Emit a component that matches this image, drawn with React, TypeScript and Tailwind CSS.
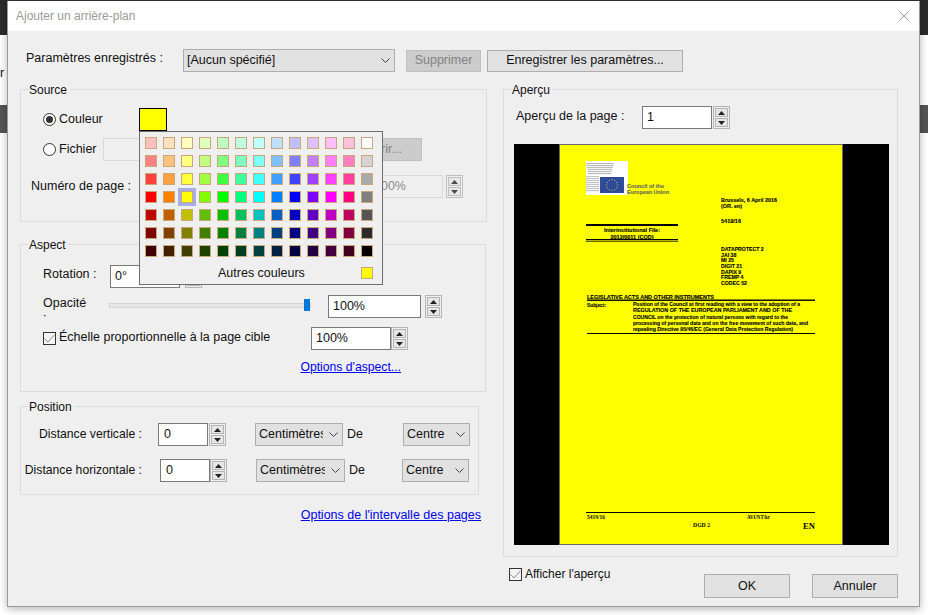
import type { ReactNode } from 'react';

const PALETTE = [
  ['bg-[#ffbfbf]', 'bg-[#ffdfbf]', 'bg-[#ffffbf]', 'bg-[#dfffbf]', 'bg-[#bfffbf]', 'bg-[#bfffdf]', 'bg-[#bfffff]', 'bg-[#bfdfff]', 'bg-[#bfbfff]', 'bg-[#dfbfff]', 'bg-[#ffbfff]', 'bg-[#ffbfdf]', 'bg-[#ffffff]'],
  ['bg-[#ff8080]', 'bg-[#ffc080]', 'bg-[#ffff80]', 'bg-[#c0ff80]', 'bg-[#80ff80]', 'bg-[#80ffc0]', 'bg-[#80ffff]', 'bg-[#80c0ff]', 'bg-[#8080ff]', 'bg-[#c080ff]', 'bg-[#ff80ff]', 'bg-[#ff80c0]', 'bg-[#d4d4d4]'],
  ['bg-[#ff4040]', 'bg-[#ffa040]', 'bg-[#ffff40]', 'bg-[#a0ff40]', 'bg-[#40ff40]', 'bg-[#40ffa0]', 'bg-[#40ffff]', 'bg-[#40a0ff]', 'bg-[#4040ff]', 'bg-[#a040ff]', 'bg-[#ff40ff]', 'bg-[#ff40a0]', 'bg-[#aaaaaa]'],
  ['bg-[#ff0000]', 'bg-[#ff8000]', 'bg-[#ffff00]', 'bg-[#80ff00]', 'bg-[#00ff00]', 'bg-[#00ff80]', 'bg-[#00ffff]', 'bg-[#0080ff]', 'bg-[#0000ff]', 'bg-[#8000ff]', 'bg-[#ff00ff]', 'bg-[#ff0080]', 'bg-[#808080]'],
  ['bg-[#c00000]', 'bg-[#c06000]', 'bg-[#c0c000]', 'bg-[#60c000]', 'bg-[#00c000]', 'bg-[#00c060]', 'bg-[#00c0c0]', 'bg-[#0060c0]', 'bg-[#0000c0]', 'bg-[#6000c0]', 'bg-[#c000c0]', 'bg-[#c00060]', 'bg-[#555555]'],
  ['bg-[#800000]', 'bg-[#804000]', 'bg-[#808000]', 'bg-[#408000]', 'bg-[#008000]', 'bg-[#008040]', 'bg-[#008080]', 'bg-[#004080]', 'bg-[#000080]', 'bg-[#400080]', 'bg-[#800080]', 'bg-[#800040]', 'bg-[#2b2b2b]'],
  ['bg-[#400000]', 'bg-[#402000]', 'bg-[#404000]', 'bg-[#204000]', 'bg-[#004000]', 'bg-[#004020]', 'bg-[#004040]', 'bg-[#002040]', 'bg-[#000040]', 'bg-[#200040]', 'bg-[#400040]', 'bg-[#400020]', 'bg-[#000000]'],
];

function Group({ title, className, children }: { title: string; className: string; children: ReactNode }) {
  return (
    <div className={`relative border border-[#dcdcdc] ${className}`}>
      <span className="absolute -top-[8px] left-[8px] bg-[#efefef] pr-[2px] text-[12px] leading-[16px]">{title}</span>
      {children}
    </div>
  );
}

function Spinner({ className = '' }: { className?: string }) {
  return (
    <div className={`flex h-[23px] w-[17px] shrink-0 flex-col justify-center gap-px border border-[#b4b4b4] px-px ${className}`}>
      <div className="flex h-[9px] items-center justify-center border border-[#b4b4b4] bg-[#e6e6e6]">
        <svg width="7" height="4" viewBox="0 0 7 4"><path d="M3.5 0 7 4H0z" fill="#222" /></svg>
      </div>
      <div className="flex h-[9px] items-center justify-center border border-[#b4b4b4] bg-[#e6e6e6]">
        <svg width="7" height="4" viewBox="0 0 7 4"><path d="M3.5 4 7 0H0z" fill="#222" /></svg>
      </div>
    </div>
  );
}

function Field({ value, className }: { value: string; className: string }) {
  return (
    <div className={`flex h-[23px] shrink-0 items-center border border-[#7a7a7a] bg-white pb-px pl-[4px] ${className}`}>
      {value}
    </div>
  );
}

function Select({ value, className }: { value: string; className: string }) {
  return (
    <div className={`flex h-[23px] shrink-0 items-center border border-[#adadad] bg-[#e1e1e1] pb-px pl-[3px] pr-[4px] ${className}`}>
      <span className="min-w-0 flex-1 overflow-hidden whitespace-nowrap">{value}</span>
      <svg className="ml-[6px] shrink-0" width="9" height="5" viewBox="0 0 9 5" fill="none" stroke="#444">
        <path d="M.5.5 4.5 4.5 8.5.5" />
      </svg>
    </div>
  );
}

function Check() {
  return (
    <div className="flex h-[13px] w-[13px] shrink-0 items-center justify-center border border-[#333] bg-[#f4f4f4]">
      <svg width="11" height="9" viewBox="0 0 11 9" fill="none" stroke="#8a8a8a">
        <path d="M.5 4.5 4 8 10.5.8" />
      </svg>
    </div>
  );
}

function Radio({ on }: { on?: boolean }) {
  return (
    <div className="flex h-[13px] w-[13px] shrink-0 items-center justify-center rounded-full border border-[#333] bg-white">
      {on && <div className="h-[7px] w-[7px] rounded-full bg-[#333]" />}
    </div>
  );
}

function LinkText({ children }: { children: ReactNode }) {
  return <a className="text-[#0000ee] underline underline-offset-1 leading-[17px]">{children}</a>;
}

function ColorPopup() {
  return (
    <div className="absolute left-0 top-[23px] z-10 h-[154px] w-[244px] border border-[#6e6e6e] bg-[#efefef] pl-[5px] pt-[5px]">
      <div className="grid grid-cols-[repeat(13,12px)] gap-[6px]">
        {PALETTE.flat().map((color, i) => (
          <div
            key={i}
            className={`h-[12px] w-[12px] border border-[#c8a878] ${color} ${i === 41 ? 'ring-[3px] ring-[#a6aee8]' : ''}`}
          />
        ))}
      </div>
      <div className="mt-[9px] flex h-[14px] w-[228px] items-center">
        <span className="ml-[73px]">Autres couleurs</span>
        <div className="ml-auto h-[12px] w-[12px] border border-[#c8a878] bg-[#ffff00]" />
      </div>
    </div>
  );
}

const ADDRESSEES = [
  ['DATAPROTECT 2', 251],
  ['JAI 38', 256.5],
  ['MI 25', 262],
  ['DIGIT 21', 268],
  ['DAPIX 9', 273.5],
  ['FREMP 4', 279],
  ['CODEC 52', 285],
] as const;

const SUBJECT = [
  ['Position of the Council at first reading with a view to the adoption of a', 306, 167],
  ['REGULATION OF THE EUROPEAN PARLIAMENT AND OF THE', 312, 159],
  ['COUNCIL on the protection of natural persons with regard to the', 319, 155],
  ['processing of personal data and on the free movement of such data, and', 325, 175],
  ['repealing Directive 95/46/EC (General Data Protection Regulation)', 331, 160],
] as const;

const STARS = Array.from({ length: 12 }, (_, i) => ({
  cx: 612 + 5.5 * Math.cos((i * Math.PI) / 6),
  cy: 185 + 5.5 * Math.sin((i * Math.PI) / 6),
}));

// thumbnail of the document, coordinates are screen pixels
function PageThumb() {
  return (
    <svg className="ml-[45px] block" width="284" height="401" viewBox="559 144 284 401" fontWeight="700" fontSize="5.2" fill="#000">
      <rect x="559.5" y="144.5" width="283" height="400" fill="#ffff00" stroke="#6a6a6a" />
      <rect x="586" y="161" width="42" height="34" fill="#fff" />
      {[163, 165, 167, 169, 171, 173].map((y, i) => (
        <rect key={y} x={586 + i * 0.4} y={y} width={28 - i} height="1.2" fill="#bdbdbd" />
      ))}
      {[176, 178, 180, 182, 184, 186, 188, 190].map((y) => (
        <rect key={y} x="586" y={y} width="13" height="1.2" fill="#c4c4c4" />
      ))}
      <rect x="600" y="177" width="24" height="16" fill="#2f4a98" />
      {STARS.map((s, i) => (
        <circle key={i} cx={s.cx} cy={s.cy} r="0.6" fill="#e8d840" />
      ))}
      <g fill="#6f6f50" stroke="#6f6f50" strokeWidth="0.15">
        <text x="627" y="187.5" textLength="37" lengthAdjust="spacingAndGlyphs">Council of the</text>
        <text x="627" y="193.5" textLength="42" lengthAdjust="spacingAndGlyphs">European Union</text>
      </g>
      <g stroke="#000" strokeWidth="0.12">
        <text x="721" y="201.5" textLength="56" lengthAdjust="spacingAndGlyphs">Brussels, 6 April 2016</text>
        <text x="721" y="207.5" textLength="21" lengthAdjust="spacingAndGlyphs">(OR. en)</text>
        <text x="721" y="223" textLength="20" lengthAdjust="spacingAndGlyphs">5419/16</text>
        <text x="604" y="231.5" textLength="56" lengthAdjust="spacingAndGlyphs">Interinstitutional File:</text>
        <text x="610.5" y="238.5" textLength="43" lengthAdjust="spacingAndGlyphs">2012/0011 (COD)</text>
        {ADDRESSEES.map(([t, y]) => (
          <text key={t} x="721" y={y}>{t}</text>
        ))}
        <text x="587" y="298.5" textLength="127" lengthAdjust="spacingAndGlyphs">LEGISLATIVE ACTS AND OTHER INSTRUMENTS</text>
        <text x="587" y="306.5" textLength="19" lengthAdjust="spacingAndGlyphs">Subject:</text>
        {SUBJECT.map(([t, y, w]) => (
          <text key={t} x="633" y={y} textLength={w} lengthAdjust="spacingAndGlyphs">{t}</text>
        ))}
      </g>
      <rect x="586" y="224" width="92" height="2" fill="#000" />
      <rect x="586" y="239" width="92" height="1" fill="#000" />
      <rect x="586" y="240.7" width="92" height="0.9" fill="#000" />
      <rect x="587" y="299.5" width="228" height="1.4" fill="#000" />
      <rect x="587" y="333" width="228" height="1" fill="#000" />
      <rect x="586" y="512" width="229" height="1" fill="#000" />
      <g fontFamily="'Liberation Serif', serif" fontSize="5.4">
        <text x="587" y="519" textLength="18" lengthAdjust="spacingAndGlyphs">5419/16</text>
        <text x="693" y="526.5" textLength="17" lengthAdjust="spacingAndGlyphs">DGD 2</text>
        <text x="747" y="519" textLength="23" lengthAdjust="spacingAndGlyphs">AVI/NT/kr</text>
        <text x="803" y="528.5" fontSize="8.5">EN</text>
      </g>
    </svg>
  );
}

export default function App() {
  return (
    <div className="relative h-[615px] w-[928px] overflow-hidden bg-white pt-px pl-[7px] font-['Liberation_Sans',Arial,sans-serif] text-[12.5px] text-[#111]">
      {/* app behind the dialog */}
      <div className="absolute inset-x-0 top-0 h-px bg-[#333]" />
      <div className="absolute left-0 top-0 h-[35px] w-[7px] bg-[#2b2b2b]" />
      <div className="absolute left-0 top-[105px] h-[28px] w-[7px] bg-[#555]" />
      <span className="absolute left-0 top-[64px]">r</span>
      <div className="absolute right-0 top-0 h-[35px] w-[8px] bg-[#2b2b2b]" />
      <div className="absolute right-0 top-[105px] h-[28px] w-[8px] bg-[#555]" />

      <div className="relative flex h-[606px] w-[913px] flex-col border-x border-b border-[#9a9a9a] bg-[#efefef] shadow-[0_2px_8px_rgba(0,0,0,0.3)]">
        <div className="flex h-[30px] shrink-0 items-center justify-between bg-white pl-[8px] pr-[9px] text-[12px] text-[#9a9a9a]">
          <span>Ajouter un arrière-plan</span>
          <svg width="12" height="12" viewBox="0 0 12 12" stroke="#a0a0a0" fill="none">
            <path d="M.5.5 11.5 11.5M11.5.5.5 11.5" />
          </svg>
        </div>

        <div className="flex flex-col pl-[12px]">
          <div className="mt-[18px] flex h-[23px] items-center pl-[6px]">
            <span className="w-[157px] pb-[4px]">Paramètres enregistrés :</span>
            <Select value="[Aucun spécifié]" className="w-[212px]" />
            <button className="ml-[11px] h-[22px] w-[75px] border border-[#bfbfbf] bg-[#cccccc] pb-px text-[#838383]">Supprimer</button>
            <button className="ml-[6px] h-[22px] w-[196px] border border-[#adadad] bg-[#e1e1e1] pb-px">Enregistrer les paramètres...</button>
          </div>

          <div className="mt-[17px] flex items-start">
            <div className="flex w-[467px] flex-col">
              <Group title="Source" className="h-[133px] w-[467px]">
                <div className="mt-[18px] flex h-[23px] items-center pl-[22px]">
                  <Radio on />
                  <span className="ml-[3px] w-[80px]">Couleur</span>
                  <div className="relative">
                    <div className="h-[23px] w-[28px] border border-black bg-[#ffff00]" />
                    <ColorPopup />
                  </div>
                </div>
                <div className="mt-[7px] flex h-[23px] items-center pl-[22px]">
                  <Radio />
                  <span className="ml-[3px] w-[44px]">Fichier</span>
                  <div className="h-[23px] w-[230px] border border-[#d8d8d8] bg-[#efefef]" />
                  <button className="ml-[5px] h-[23px] w-[84px] border border-[#bfbfbf] bg-[#cccccc] text-[#838383]">Ouvrir...</button>
                </div>
                <div className="mt-[14px] flex h-[23px] items-center pl-[10px]">
                  <span className="w-[337px]">Numéro de page :</span>
                  <div className="flex h-[23px] w-[75px] items-center border border-[#d8d8d8] pl-[5px] text-[#8a8a8a]">100%</div>
                  <Spinner className="ml-[3px] opacity-80" />
                </div>
              </Group>

              <Group title="Aspect" className="mt-[22px] h-[148px] w-[466px]">
                <div className="mt-[20px] flex h-[23px] items-center pl-[22px]">
                  <span className="w-[67px] pb-[4px]">Rotation :</span>
                  <Field value="0°" className="w-[70px]" />
                  <Spinner className="ml-[5px]" />
                </div>
                <div className="mt-[7px] flex h-[23px] items-center pl-[22px]">
                  <span className="h-[23px] w-[46px] overflow-hidden pt-px leading-[15px]">Opacité :</span>
                  <div className="relative ml-[20px] mb-[3px] h-[5px] w-[202px] border border-[#d4d4d4] bg-[#e6e6e6]">
                    <div className="absolute -top-[5px] left-[194px] h-[12px] w-[6px] bg-[#0078d7]" />
                  </div>
                  <Field value="100%" className="ml-[17px] w-[93px]" />
                  <Spinner className="ml-[4px]" />
                </div>
                <div className="mt-[9px] flex h-[23px] items-center pl-[22px]">
                  <Check />
                  <span className="ml-[3px] w-[252px] pb-[3px]">Échelle proportionnelle à la page cible</span>
                  <Field value="100%" className="w-[80px]" />
                  <Spinner />
                </div>
                <div className="mt-[9px] flex justify-end pr-[84px] text-[12.2px]">
                  <LinkText>Options d'aspect...</LinkText>
                </div>
              </Group>

              <Group title="Position" className="mt-[14px] h-[89px] w-[459px]">
                <div className="mt-[16px] flex h-[23px] items-center">
                  <span className="w-[121px] text-right text-[12.2px]">Distance verticale :</span>
                  <Field value="0" className="ml-[16px] w-[50px] pl-[5px] pb-[3px]" />
                  <Spinner className="ml-px" />
                  <Select value="Centimètres" className="ml-[29px] w-[88px]" />
                  <span className="ml-[4px] w-[56px]">De</span>
                  <Select value="Centre" className="w-[67px]" />
                </div>
                <div className="mt-[13px] flex h-[23px] items-center">
                  <span className="w-[121px] text-right text-[12.2px]">Distance horizontale :</span>
                  <Field value="0" className="ml-[18px] w-[50px] pl-[5px] pb-[3px]" />
                  <Spinner />
                  <Select value="Centimètres" className="ml-[29px] w-[89px]" />
                  <span className="ml-[4px] w-[53px]">De</span>
                  <Select value="Centre" className="w-[67px]" />
                </div>
              </Group>

              <div className="mt-[12px] flex w-[461px] justify-end">
                <LinkText>Options de l'intervalle des pages</LinkText>
              </div>
            </div>

            <div className="ml-[16px] flex w-[395px] flex-col">
              <Group title="Aperçu" className="h-[468px] w-[395px]">
                <div className="mt-[16px] flex h-[23px] items-center pl-[12px]">
                  <span className="w-[126px] pb-[3px]">Aperçu de la page :</span>
                  <Field value="1" className="w-[70px]" />
                  <Spinner className="ml-px" />
                </div>
                <div className="ml-[10px] mt-[15px] h-[401px] w-[375px] bg-black">
                  <PageThumb />
                </div>
              </Group>
              <div className="mt-[11px] flex items-start pl-[6px]">
                <Check />
                <span className="ml-[3px] text-[12px] leading-[13px]">Afficher l'aperçu</span>
                <button className="ml-auto mt-[6px] h-[24px] w-[86px] border border-[#adadad] bg-[#e1e1e1]">OK</button>
                <button className="ml-[22px] mt-[6px] h-[24px] w-[86px] border border-[#adadad] bg-[#e1e1e1]">Annuler</button>
              </div>
            </div>
          </div>
        </div>
      </div>
    </div>
  );
}
